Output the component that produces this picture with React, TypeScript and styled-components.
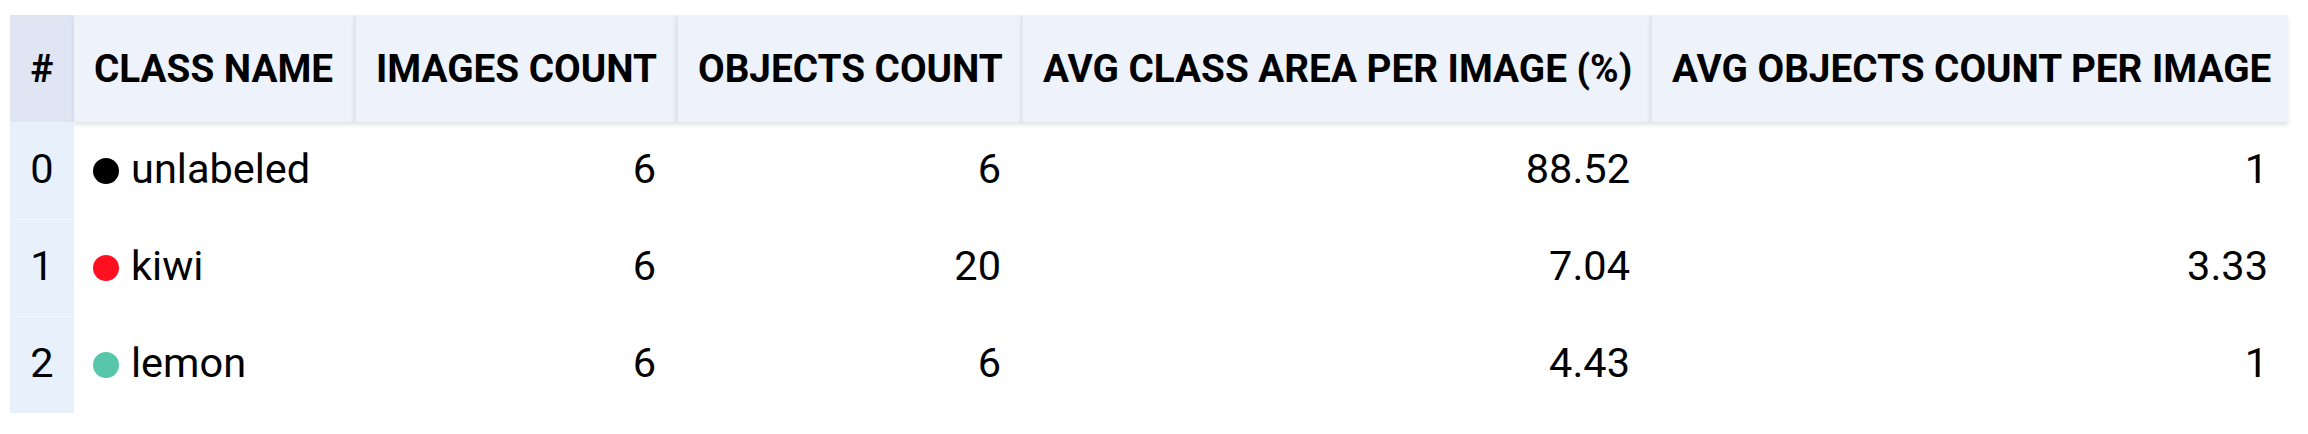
import React from "react";
import { styled, createGlobalStyle } from "styled-components";

const GlobalStyle = createGlobalStyle`
  html, body {
    margin: 0;
    padding: 0;
    background: #ffffff;
  }
  body {
    font-family: Roboto, "Liberation Sans", sans-serif;
    color: #000000;
  }
`;

const columns = [
  { title: "#", width: 64 },
  { title: "CLASS NAME", width: 280 },
  { title: "IMAGES COUNT", width: 322 },
  { title: "OBJECTS COUNT", width: 345 },
  { title: "AVG CLASS AREA PER IMAGE (%)", width: 629 },
  { title: "AVG OBJECTS COUNT PER IMAGE", width: 638 },
];

const rows = [
  { name: "unlabeled", color: "#000000", images: "6", objects: "6", area: "88.52", avg: "1" },
  { name: "kiwi", color: "#ff0f1f", images: "6", objects: "20", area: "7.04", avg: "3.33" },
  { name: "lemon", color: "#57c6ab", images: "6", objects: "6", area: "4.43", avg: "1" },
];

const App = () => {
  return (
    <Page>
      <GlobalStyle />
      <StatsTable>
        <colgroup>
          {columns.map((col) => (
            <col key={col.title} style={{ width: col.width }} />
          ))}
        </colgroup>
        <thead>
          <HeadRow>
            <IndexHead>#</IndexHead>
            {columns.slice(1).map((col, i) => (
              <HeadCell key={col.title} $first={i === 0}>
                {col.title}
              </HeadCell>
            ))}
          </HeadRow>
        </thead>
        <tbody>
          {rows.map((row, index) => (
            <BodyRow key={row.name}>
              <IndexCell $first={index === 0}>{index}</IndexCell>
              <NameCell>
                <Dot $color={row.color} />
                {row.name}
              </NameCell>
              <NumCell>{row.images}</NumCell>
              <NumCell>{row.objects}</NumCell>
              <NumCell>{row.area}</NumCell>
              <NumCell>{row.avg}</NumCell>
            </BodyRow>
          ))}
        </tbody>
      </StatsTable>
    </Page>
  );
};

export default App;

const Page = styled.div`
  padding: 15px 20px 0 10px;
`;

const StatsTable = styled.table`
  width: 2278px;
  table-layout: fixed;
  border-collapse: separate;
  border-spacing: 0;
`;

const HeadRow = styled.tr`
  height: 107px;
`;

const BodyRow = styled.tr`
  height: 97px;
`;

const IndexHead = styled.th`
  padding: 0;
  background: #dfe5f3;
  font-size: 38.7px;
  font-weight: 700;
  text-align: center;
  vertical-align: middle;
`;

const HeadCell = styled.th<{ $first?: boolean }>`
  padding: 0 18px 0 20px;
  background: #eef2fa;
  font-size: 38.7px;
  font-weight: 700;
  text-align: left;
  white-space: nowrap;
  vertical-align: middle;
  border-left: ${(p) => (p.$first ? "none" : "2px solid #e2e6ef")};
  box-shadow: 0 3px 4px rgba(40, 50, 70, 0.13);
`;

const IndexCell = styled.td<{ $first?: boolean }>`
  padding: 0 0 5px;
  background: #e8f1fb;
  border-top: ${(p) => (p.$first ? "none" : "1px solid #f1f6fd")};
  font-size: 41.5px;
  text-align: center;
  vertical-align: middle;
`;

const NameCell = styled.td`
  padding: 0 20px 5px 19px;
  font-size: 41.5px;
  white-space: nowrap;
  vertical-align: middle;
`;

const NumCell = styled.td`
  padding: 0 20px 5px;
  font-size: 41.5px;
  text-align: right;
  white-space: nowrap;
  vertical-align: middle;
`;

const Dot = styled.span<{ $color: string }>`
  display: inline-block;
  width: 26px;
  height: 26px;
  border-radius: 50%;
  background: ${(p) => p.$color};
  margin-right: 12px;
  vertical-align: -1px;
`;
